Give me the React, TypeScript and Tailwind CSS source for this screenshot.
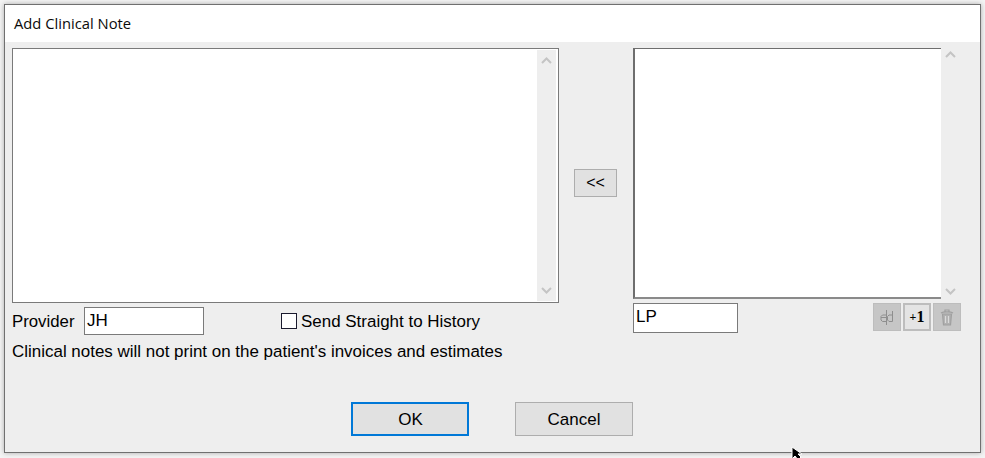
export default function App() {
  const btn = "flex items-center justify-center box-border bg-[#e1e1e1] text-[#000] font-['Liberation_Sans',sans-serif]";
  const chev = "#c4c4c4";
  const Up = () => (
    <svg width="11" height="7" viewBox="0 0 11 7" fill="none"><path d="M1 6L5.5 1.5L10 6" stroke={chev} strokeWidth="2" /></svg>
  );
  const Down = () => (
    <svg width="11" height="7" viewBox="0 0 11 7" fill="none"><path d="M1 1L5.5 5.5L10 1" stroke={chev} strokeWidth="2" /></svg>
  );
  return (
    <div className="relative w-[985px] h-[458px] overflow-hidden bg-[#f4f4f4] pl-1 pt-1 font-['Liberation_Sans',sans-serif] text-black">
      <div className="flex flex-col w-[977px] h-[449px] box-border border border-[#707070] shadow-[0_0_5px_rgba(0,0,0,0.3)] bg-[#eeeeee]">
        <div className="h-[37px] shrink-0 bg-white pl-[9px] pt-[8px] text-[14.75px] leading-[20px] font-['Open_Sans',sans-serif] text-[#0a0a0a]">
          Add Clinical Note
        </div>
        <div className="flex flex-col flex-1 pl-[7px] pt-[6px] pb-[16px]">
          <div className="flex">
            <div className="w-[547px] shrink-0">
              <div className="flex justify-end w-full h-[255px] box-border border border-[#7a7a7a] bg-white p-px pr-[2px]">
                <div className="flex flex-col justify-between items-center w-[19px] bg-[#eeeeee] py-[7px]">
                  <Up />
                  <Down />
                </div>
              </div>
              <div className="flex items-center mt-[4px] h-[28px]">
                <span className="text-[16.8px] w-[72px] pt-[2px]">Provider</span>
                <div className="w-[120px] h-[28px] box-border border border-[#7a7a7a] bg-white pl-[2px] text-[17px] leading-[26px]">JH</div>
                <div className="ml-[77px] w-[16px] h-[16px] box-border border border-[#1a1a2e] bg-white" />
                <span className="ml-[4px] text-[16.97px] whitespace-nowrap pt-[2px]">Send Straight to History</span>
              </div>
              <p className="mt-[8px] text-[16.97px] leading-[18px] whitespace-nowrap">Clinical notes will not print on the patient's invoices and estimates</p>
            </div>
            <div className="w-[74px] shrink-0 pl-[15px] pt-[121px]">
              <div className={`${btn} border border-[#adadad] w-[43px] h-[28px] text-[16px]`}>&lt;&lt;</div>
            </div>
            <div className="flex-1">
              <div className="flex h-[251px]">
                <div className="w-[308px] box-border border-l-2 border-t border-b-2 border-[#6e6e6e] border-b-[#8a8a8a] bg-white" />
                <div className="flex flex-col justify-between items-center w-[20px] pt-[3px] pb-[4px] pr-[1px]">
                  <Up />
                  <Down />
                </div>
              </div>
              <div className="flex mt-[4px]">
                <div className="w-[105px] h-[30px] box-border border border-[#7a7a7a] bg-white pl-[2px] text-[17px] leading-[26px]">LP</div>
                <div className="flex gap-[2px] ml-[135px]">
                  <div className="flex items-center justify-center w-[28px] h-[28px] box-border border border-[#bdbdbd] bg-[#c6c6c6]">
                    <svg width="16" height="18" viewBox="0 0 16 18" fill="none" stroke="#8e8e8e" strokeWidth="1">
                      <path d="M7.5 2V17" />
                      <path d="M2 9.5H7M7 7H3.5L2 8.5V12L3.5 13.5H7" />
                      <path d="M13.5 3V13.5H10L8.5 12V8.5L10 7H13.5" />
                    </svg>
                  </div>
                  <div className="flex items-center justify-center w-[28px] h-[28px] box-border border-2 border-[#bdbdbd] bg-[#e4e4e4] font-bold font-['Liberation_Serif',serif] text-[#000]">
                    <span className="text-[12px]">+</span><span className="text-[16px] leading-none">1</span>
                  </div>
                  <div className="flex items-center justify-center w-[28px] h-[28px] box-border border border-[#bdbdbd] bg-[#c6c6c6]">
                    <svg width="14" height="17" viewBox="0 0 14 17" fill="none" stroke="#a0a0a0" strokeWidth="1.2">
                      <path d="M1 4C3 2.5 11 2.5 13 4M5 2.5V1H9V2.5" />
                      <path d="M2.5 5L3.5 16H10.5L11.5 5Z" fill="#b0b0b0" />
                      <path d="M5.5 7V14M8.5 7V14" stroke="#dadada" />
                    </svg>
                  </div>
                </div>
              </div>
            </div>
          </div>
          <div className="flex justify-center gap-[46px] mt-auto pr-[9px]">
            <div className={`${btn} w-[118px] h-[34px] border-2 border-[#0078d7] text-[17px] pl-[2px] pt-[1px]`}>OK</div>
            <div className={`${btn} w-[118px] h-[34px] border border-[#adadad] text-[17px] pl-[1px] pt-[1px]`}>Cancel</div>
          </div>
        </div>
      </div>
      <svg className="absolute left-[790px] top-[446px]" width="14" height="12" viewBox="0 0 14 12">
        <path d="M2 1V13L5 10L8 14L11 11L8 8H12Z" fill="#000" stroke="#fff" strokeWidth="1" />
      </svg>
    </div>
  );
}
